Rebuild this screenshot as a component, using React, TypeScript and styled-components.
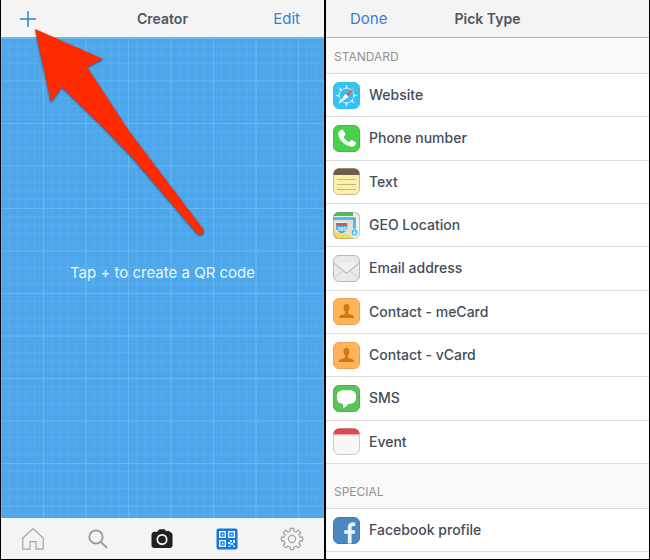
import React from 'react';
import styled, { createGlobalStyle } from 'styled-components';

const GlobalStyle = createGlobalStyle`
  *, *::before, *::after { box-sizing: border-box; }
  body { margin: 0; background: #000; font-family: Inter, "Liberation Sans", sans-serif; }
  button { font: inherit; color: inherit; background: none; border: 0; padding: 0; cursor: pointer; }
  svg { display: block; flex: none; }
  ul, h1, h2, p { margin: 0; padding: 0; list-style: none; font-weight: inherit; font-size: inherit; }
`;

const Screens = styled.div`
  display: grid;
  grid-template-columns: 1fr 1fr;
  gap: 2px;
  height: 100vh;
  padding: 0 1px 1px;
`;

const Screen = styled.section`
  display: flex;
  flex-direction: column;
  min-width: 0;
  overflow: hidden;
  background: #fff;
  position: relative;
`;

const NavBar = styled.header<{ $line: string }>`
  display: grid;
  grid-template-columns: 1fr auto 1fr;
  align-items: center;
  flex: none;
  height: 38px;
  padding: 0 18px;
  background: #f4f4f4;
  border-bottom: 1px solid ${(p) => p.$line};
`;

const NavTitle = styled.h1`
  font-size: 14px;
  line-height: 20px;
  font-weight: 600;
  color: #4d5663;
`;

const IconButton = styled.button`
  justify-self: start;
`;

const NavButton = styled.button<{ $side: 'start' | 'end' }>`
  justify-self: ${(p) => p.$side};
  padding: 0 6px;
  font-size: 15px;
  line-height: 20px;
  color: #337fda;
`;

const Canvas = styled.main`
  position: relative;
  flex: 1;
  display: grid;
  place-items: center;
  padding-bottom: 10px;
  background: #4ea6eb;
`;

const GridPaper = styled.svg`
  position: absolute;
  inset: 0;
  width: 100%;
  height: 100%;
`;

const Hint = styled.p`
  position: relative;
  font-size: 15px;
  line-height: 20px;
  color: #e6f7ff;
`;

const Pointer = styled.svg`
  position: absolute;
  left: 0;
  top: 0;
  pointer-events: none;
  filter: drop-shadow(0 1px 1px rgba(30, 40, 70, 0.7));
`;

const TabBar = styled.nav`
  display: grid;
  grid-template-columns: repeat(5, 1fr);
  flex: none;
  height: 41px;
  background: #f4f4f4;
`;

const Tab = styled.button`
  display: grid;
  place-items: center;
`;

const GroupTitle = styled.h2<{ $spaced?: boolean }>`
  flex: none;
  padding: ${(p) => (p.$spaced ? '20px' : '11px')} 8px 8px;
  font-size: 12px;
  line-height: 16px;
  color: #929292;
  background: #f9f9f9;
  border-bottom: 1px solid #dedede;
`;

const TypeList = styled.ul<{ $min: number }>`
  display: grid;
  grid-auto-rows: 1fr;
  flex: none;
  min-height: ${(p) => p.$min}px;
`;

const TypeItem = styled.li`
  display: flex;
  border-bottom: 1px solid #dedede;
`;

const TypeButton = styled.button`
  display: flex;
  align-items: center;
  gap: 9px;
  flex: 1;
  padding: 0 7px;
  font-size: 14px;
  line-height: 20px;
  font-weight: 500;
  color: #444d5a;
  text-align: left;
`;

function BlueprintGrid() {
  const minors = [1, 2, 3, 4, 6, 7, 8, 9].map((n) => n * 8.5);
  return (
    <GridPaper aria-hidden="true">
      <defs>
        <pattern id="paper" x="42" y="0" width="85" height="85" patternUnits="userSpaceOnUse">
          {minors.map((p) => (
            <path key={p} d={`M${p} 0V85M0 ${p}H85`} stroke="#62b6f3" strokeWidth="1" opacity="0.4" />
          ))}
          <path d="M.5 0V85M43 0V85M0 .5H85M0 43H85" stroke="#6cc0f8" strokeWidth="1.2" opacity="0.75" />
        </pattern>
      </defs>
      <rect width="100%" height="100%" fill="url(#paper)" />
    </GridPaper>
  );
}

const PlusIcon = () => (
  <svg width="18" height="18" viewBox="0 0 18 18" stroke="#3585c6" strokeWidth="1.5">
    <path d="M9 1v16M1 9h16" />
  </svg>
);

const HomeIcon = () => (
  <svg width="22" height="22" viewBox="0 0 22 22" fill="none" stroke="#a3a3a3" strokeWidth="1.2">
    <path d="M.8 10 11 .8 21.2 10v11.2H14v-7.5H8v7.5H.8z" strokeLinejoin="round" />
  </svg>
);

const SearchIcon = () => (
  <svg width="20" height="20" viewBox="0 0 20 20" fill="none" stroke="#999">
    <circle cx="8" cy="8" r="6.7" strokeWidth="1.8" />
    <path d="m12.8 12.8 6.2 6.2" strokeWidth="1.8" />
  </svg>
);

const CameraIcon = () => (
  <svg width="22" height="22" viewBox="0 0 22 22">
    <path d="M6.3 3.8 7.6 2c.3-.5.7-.7 1.3-.7h4.200c.6 0 1 .2 1.300.7l1.300 1.800V3h3v1.100c1.600.2 2.800 1.300 2.800 2.900v10.200c0 1.700-1.200 2.800-2.900 2.800H3.400C1.700 20 .5 18.900.5 17.200V7c0-1.900 1.300-3.200 3.100-3.200z" fill="#202020" />
    <circle cx="11" cy="11.500" r="4.700" fill="none" stroke="#f8f8f8" strokeWidth="1.700" />
  </svg>
);

const QrIcon = () => (
  <svg width="22" height="22" viewBox="0 0 22 22">
    <rect x=".5" y=".5" width="21" height="21" rx="2" fill="#1478e0" />
    <g fill="none" stroke="#e3f4ff" strokeWidth="1.400">
      <rect x="3.700" y="3.700" width="5.600" height="5.600" />
      <rect x="12.700" y="3.700" width="5.600" height="5.600" />
      <rect x="3.700" y="12.700" width="5.600" height="5.600" />
    </g>
    <path d="M5.700 5.700h1.700v1.700H5.700zM14.700 5.700h1.700v1.700h-1.700zM5.700 14.700h1.700v1.700H5.700zM14 12h2v2h-2zM12 14h2v2h-2zM17 12h2v3h-2zM14.500 15h2.500v2h-2.500zM12.500 17.500h2V19h-2zM17 17.500h2V19h-2z" fill="#e3f4ff" />
  </svg>
);

function GearIcon() {
  const teeth = 8;
  const point = (r: number, deg: number) => {
    const a = (deg * Math.PI) / 180;
    return `${(12 + r * Math.sin(a)).toFixed(2)} ${(12 - r * Math.cos(a)).toFixed(2)}`;
  };
  let d = '';
  for (let i = 0; i < teeth; i += 1) {
    const a = (i * 360) / teeth;
    d += `${i ? 'L' : 'M'}${point(8.2, a - 12)}L${point(10.8, a - 10)}L${point(10.8, a + 10)}L${point(8.2, a + 12)}`;
    d += `A8.2 8.2 0 0 1 ${point(8.2, a + 33)}`;
  }
  return (
    <svg width="24" height="24" viewBox="0 0 24 24" fill="none" stroke="#a3a3a3" strokeWidth="1.200">
      <path d={`${d}Z`} strokeLinejoin="round" />
      <circle cx="12" cy="12" r="3.600" />
    </svg>
  );
}

const Tile = ({ fill, edge, children }: { fill: string; edge: string; children?: React.ReactNode }) => (
  <svg width="27" height="27" viewBox="0 0 27 27" aria-hidden="true">
    <rect x=".5" y=".5" width="26" height="26" rx="5.500" fill={fill} stroke={edge} />
    {children}
  </svg>
);

const WebsiteIcon = () => (
  <Tile fill="#35c2f2" edge="#35bdec">
    <circle cx="13.500" cy="13.500" r="7.400" fill="none" stroke="#b4ebfa" strokeWidth="1" />
    {[0, 45, 90, 135, 180, 225, 270, 315].map((a) => (
      <path key={a} d="M12 6.600 13.500 2l1.500 4.600z" fill="#c8f2fc" transform={`rotate(${a} 13.500 13.500)`} />
    ))}
    <path d="m21.500 5.500-5.800 9.400-3.200-3.100z" fill="#cf6a72" />
    <path d="m5.800 21.200 6.700-9.400 3.200 3.100z" fill="#fff" />
  </Tile>
);

const PhoneIcon = () => (
  <Tile fill="#48d24b" edge="#3dbd40">
    <path d="M8.200 4.800c.8-.6 1.500-.3 2 .5l2 3.200c.5.8.3 1.400-.3 1.900l-1.100.9c-.3.300-.3.600-.100 1 1.300 2.200 2.800 3.700 5 4.700.400.200.700.100.900-.2l1-1.300c.5-.6 1.100-.7 1.800-.3l3 1.800c.9.500 1 1.200.500 2-1.200 2-3 3-5.300 2.500C10.700 20 5.800 14.500 5.300 9.300 5.100 7.500 6.300 6 8.200 4.800z" fill="#fff" />
  </Tile>
);

const NotesIcon = () => (
  <Tile fill="#fdeeae" edge="#c8b987">
    <path d="M.5 7V6A5.500 5.500 0 0 1 6 .5h15A5.500 5.500 0 0 1 26.500 6v1z" fill="#6f5c4b" />
    <path d="M4 11.500h19M4 16.500h19M4 21.500h19" stroke="#c6b780" />
  </Tile>
);

const MapIcon = () => (
  <svg width="27" height="27" viewBox="0 0 27 27" aria-hidden="true">
    <defs>
      <clipPath id="mapTile"><rect width="27" height="27" rx="6" /></clipPath>
    </defs>
    <g clipPath="url(#mapTile)">
      <rect width="27" height="27" fill="#f4f0e7" />
      <path d="M0 0h20v4H0z" fill="#4ac350" />
      <path d="M0 7h20v20H0z" fill="#e5dfcf" />
      <path d="M23 0h4v5z" fill="#e999a4" />
      <path d="M0 17 6 22h8l7 5H0z" fill="#f7d75e" />
      <path d="M0 23v4h6z" fill="#a9cc79" />
      <path d="M0 6.500h21.500V20" fill="none" stroke="#38b5ee" strokeWidth="2.600" />
      <path d="M3 10.500h11.500l.5 5c0 3.500-3 5.300-6.200 6.500-3.300-1.200-6.300-3-6.300-6.500z" fill="#36aee6" stroke="#fff" strokeWidth=".8" />
      <path d="M3.200 11h11.100l.3 2.200H3z" fill="#dd4b50" />
      <text x="8.800" y="18.600" textAnchor="middle" fill="#fff" fontSize="5" fontWeight="700">280</text>
      <circle cx="21.500" cy="20.500" r="3.400" fill="#38b5ee" stroke="#eafaff" strokeWidth=".7" />
      <path d="m21.500 18 1.800 4.200-1.800-.8-1.800.8z" fill="#fff" />
    </g>
    <rect x=".5" y=".5" width="26" height="26" rx="5.500" fill="none" stroke="#777" strokeOpacity=".35" />
  </svg>
);

const MailIcon = () => (
  <Tile fill="#e9e9e9" edge="#b9b9b9">
    <path d="m1 23 9.500-7.500M26 23l-9.500-7.500" stroke="#cfcfcf" fill="none" />
    <path d="m1 8 11.200 9.400c.9.700 1.700.7 2.600 0L26 8" stroke="#a9a9a9" fill="#f0f0f0" />
  </Tile>
);

const ContactIcon = () => (
  <Tile fill="#fdb45b" edge="#e9a452">
    <path d="M13.500 6c2.200 0 3.200 1.600 3 3.800-.1 1.600-.6 2.700-1.400 3.500v1.700c0 .7.400 1 1.100 1.200l2.600.9c1.500.5 2.300 1.400 2.400 3H5.800c.1-1.600.9-2.500 2.400-3l2.600-.9c.7-.2 1.100-.5 1.100-1.200v-1.700c-.8-.8-1.300-1.900-1.400-3.500-.2-2.200.8-3.800 3-3.800z" fill="#d5770f" />
  </Tile>
);

const SmsIcon = () => (
  <Tile fill="#5ac45b" edge="#4bb14c">
    <path d="M10.500 5.200h6c4 0 6.500 2.300 6.500 5.500v2.600c0 3.500-2.500 5.700-6.500 5.700H15c-1.300 2-2.700 3.500-5.200 4.300.5-1.500.5-2.800.1-4.400C6.300 18.600 4 16.500 4 13.300v-2.600c0-3.200 2.500-5.500 6.500-5.500z" fill="#fff" />
  </Tile>
);

const EventIcon = () => (
  <Tile fill="#f8f8f8" edge="#c9c9ce">
    <path d="M.5 6.500V6A5.500 5.500 0 0 1 6 .5h15A5.500 5.500 0 0 1 26.500 6v.5z" fill="#e0484d" />
    <path d="M1 7h25" stroke="#f3b9bb" strokeWidth=".7" />
  </Tile>
);

const FacebookIcon = () => (
  <Tile fill="#4c87c2" edge="#4178b0">
    <path d="M14.800 26.500v-9.700h-3.600v-3.600h3.600v-2.400c0-3.600 2-5.300 5-5.300 1 0 1.700.1 2.400.3v3.100h-1.600c-1.500 0-2 .7-2 2v2.300h3.500l-.5 3.600h-3v9.700z" fill="#eaf3fb" />
  </Tile>
);

const standardTypes: [string, React.FC][] = [
  ['Website', WebsiteIcon],
  ['Phone number', PhoneIcon],
  ['Text', NotesIcon],
  ['GEO Location', MapIcon],
  ['Email address', MailIcon],
  ['Contact - meCard', ContactIcon],
  ['Contact - vCard', ContactIcon],
  ['SMS', SmsIcon],
  ['Event', EventIcon],
];

const specialTypes: [string, React.FC][] = [['Facebook profile', FacebookIcon]];

const tabs: [string, React.FC][] = [
  ['Home', HomeIcon],
  ['Search', SearchIcon],
  ['Scan', CameraIcon],
  ['Creator', QrIcon],
  ['Settings', GearIcon],
];

function Types({ items, min }: { items: [string, React.FC][]; min: number }) {
  return (
    <TypeList $min={min}>
      {items.map(([label, Icon]) => (
        <TypeItem key={label}>
          <TypeButton type="button">
            <Icon />
            {label}
          </TypeButton>
        </TypeItem>
      ))}
    </TypeList>
  );
}

export default function App() {
  return (
    <>
      <GlobalStyle />
      <Screens>
        <Screen>
          <NavBar $line="#8fa9b8">
            <IconButton type="button" aria-label="Add"><PlusIcon /></IconButton>
            <NavTitle>Creator</NavTitle>
            <NavButton $side="end" type="button">Edit</NavButton>
          </NavBar>
          <Canvas>
            <BlueprintGrid />
            <Hint>Tap + to create a QR code</Hint>
          </Canvas>
          <TabBar aria-label="Sections">
            {tabs.map(([label, Icon]) => (
              <Tab key={label} type="button" aria-label={label}><Icon /></Tab>
            ))}
          </TabBar>
          <Pointer width="210" height="242" viewBox="0 0 210 242" aria-hidden="true">
            <path d="M34 29 102 59 86 67 128 131 202 229Q204 232 201 234Q198 236 195 232L130 156 106 131 61 87 50 102z" fill="#ff2a00" />
          </Pointer>
        </Screen>
        <Screen>
          <NavBar $line="#b5b5b5">
            <NavButton $side="start" type="button">Done</NavButton>
            <NavTitle>Pick Type</NavTitle>
          </NavBar>
          <GroupTitle>STANDARD</GroupTitle>
          <Types items={standardTypes} min={390} />
          <GroupTitle $spaced>SPECIAL</GroupTitle>
          <Types items={specialTypes} min={43} />
        </Screen>
      </Screens>
    </>
  );
}
